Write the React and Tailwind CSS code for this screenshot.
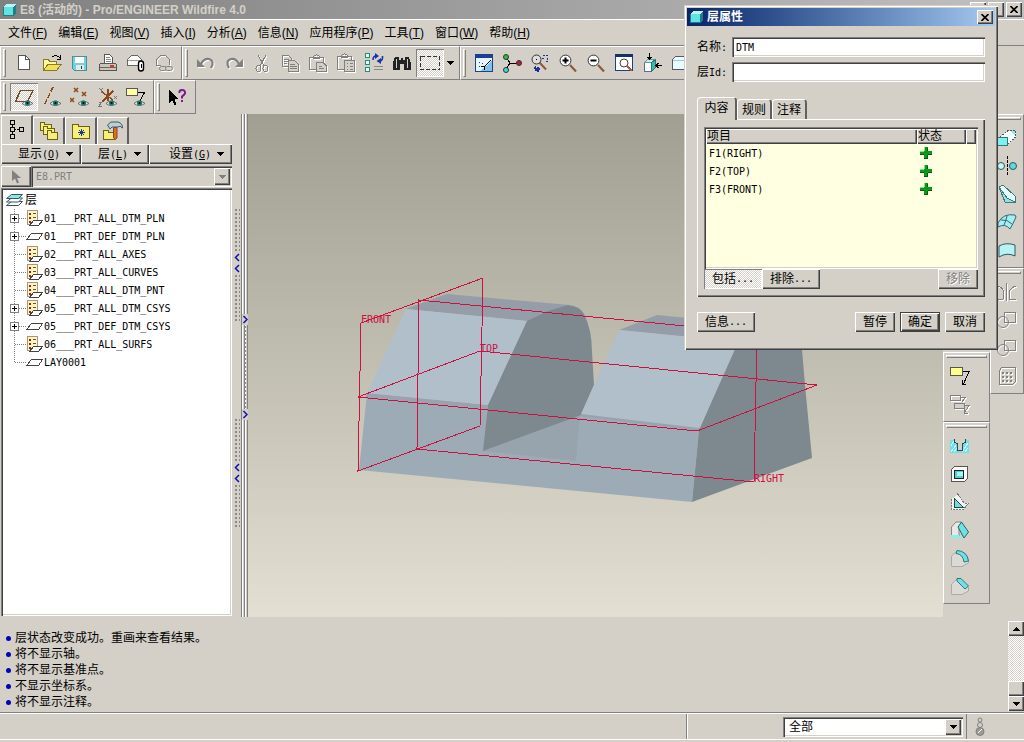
import { useState } from 'react';

const raised = "bg-[#d4d0c8] shadow-[inset_1px_1px_0_#fff,inset_-1px_-1px_0_#404040,inset_-2px_-2px_0_#808080]";
const sunken = "shadow-[inset_1px_1px_0_#808080,inset_2px_2px_0_#404040,inset_-1px_-1px_0_#fff,inset_-2px_-2px_0_#d4d0c8]";
const checker = "bg-[repeating-conic-gradient(#fff_0_25%,#d4d0c8_0_50%)] bg-[size:2px_2px]";
const pressed = `${checker} shadow-[inset_1px_1px_0_#808080,inset_-1px_-1px_0_#fff]`;
const dots = "bg-[radial-gradient(#8a8a8a_1px,transparent_1px)] bg-[size:4px_4px]";

const Mono = ({ children }) => (
  <span className="font-['DejaVu_Sans_Mono',monospace] text-[10px]">{children}</span>
);

const Svg = ({ children, off }) => (
  <svg
    width="20"
    height="20"
    viewBox="0 0 20 20"
    fill="none"
    stroke={off ? '#808080' : '#000'}
    shapeRendering="crispEdges"
    className={`shrink-0 ${off ? 'drop-shadow-[1px_1px_0_#fff]' : ''}`}
  >
    {children}
  </svg>
);

const Eye = () => (
  <g shapeRendering="auto">
    <path d="M8 16.5Q13 11.5 19 16.5Q13 20.5 8 16.5Z" fill="#d9ece8" stroke="#555" strokeWidth="0.8" />
    <circle cx="13.5" cy="16" r="2.6" fill="#177a6d" stroke="none" />
    <circle cx="13.5" cy="16" r="1" fill="#000" stroke="none" />
  </g>
);

const Lens = ({ children }) => (
  <g shapeRendering="auto">
    <path d="M12 12L18 18.5" stroke="#8b5a3c" strokeWidth="2.2" />
    <circle cx="7.5" cy="7.5" r="5.4" fill="#fff" stroke="#333" />
    {children}
  </g>
);

const icons = {
  new: <Svg><path d="M4.5 2.5H11.5L15.5 6.5V16.5H4.5Z" fill="#fff" stroke="#555" /><path d="M11.5 2.5V6.5H15.5" stroke="#555" /></Svg>,
  open: <Svg><path d="M1.5 17V6.5H6L8 8.5H14.5V11" fill="#fff6a0" stroke="#8a7a20" /><path d="M1.5 17.5L6 11H19.5L14.5 17.5Z" fill="#f3e05a" stroke="#8a7a20" /><path d="M10 4Q14 1 18 5M18.5 2V6H15" /></Svg>,
  save: <Svg><path d="M2.5 3.5H16.5V17.5H4.5L2.5 15.5Z" fill="#6fd3de" stroke="#4d8f99" /><path d="M5 4H14V10H5Z" fill="#fff" stroke="none" /><path d="M6 12H14V17H6Z" fill="#e8e8e8" stroke="none" /><path d="M11.5 13V16" stroke="#333" /></Svg>,
  print: <Svg><path d="M6.5 11V1.5H11.5L14.5 4.5V11" fill="#fff" stroke="#555" /><path d="M8 4.5H12M8 6.5H13M8 8.5H13" stroke="#888" /><path d="M2.5 10.5H17.5L18.5 12V17.5H1.5V12Z" fill="#c9c5bb" stroke="#555" /><path d="M2 14.5H18" stroke="#6b675e" /><path d="M12 12H16V14H12Z" fill="#d23b2b" stroke="none" /></Svg>,
  mail: <Svg><path d="M1.5 12.5V6.5L5.5 2.5H11.5L15.5 6.5V12.5Z" fill="#fbfbfb" stroke="#666" /><path d="M2 7.5H15" stroke="#999" /><path d="M12.5 10.5Q12.5 8 15 8Q17.5 8 17.5 10.5V15.5Q17.5 18 15 18Q12.5 18 12.5 15.5Z" fill="#fff" strokeWidth="1.4" shapeRendering="auto" /><path d="M15.5 11V15" /></Svg>,
  mailLink: <Svg off><path d="M2.5 13V6.5L6.5 2.5H11.5L15.5 6.5V12M2.5 12.5H7" /><g shapeRendering="auto"><rect x="5.5" y="13.5" width="7" height="4" rx="2" fill="#d4d0c8" /><rect x="11.5" y="13.5" width="7" height="4" rx="2" fill="#d4d0c8" /></g></Svg>,
  undo: <Svg off><g shapeRendering="auto"><path d="M5 11Q8 5 13 6Q19 8 15 15" strokeWidth="2.2" /><path d="M1 6V14H9Z" fill="#808080" stroke="none" /></g></Svg>,
  redo: <Svg off><g shapeRendering="auto"><path d="M15 11Q12 5 7 6Q1 8 5 15" strokeWidth="2.2" /><path d="M19 6V14H11Z" fill="#808080" stroke="none" /></g></Svg>,
  cut: <Svg off><path d="M6 2L12 13M14 2L8 13" /><ellipse cx="6.5" cy="15.5" rx="2.5" ry="3" /><ellipse cx="13.5" cy="15.5" rx="2.5" ry="3" /></Svg>,
  copy: <Svg off><path d="M2.5 2.5H8.5L11.5 5.5V13.5H2.5Z M4 6.5H9M4 8.5H9M4 10.5H7" /><path d="M8.5 7.5H14.5L18.5 11.5V18.5H8.5Z M10 11.5H15M10 13.5H17M10 15.5H17" fill="#d4d0c8" /></Svg>,
  paste: <Svg off><path d="M1.5 4.5H15.5V16.5H1.5Z M5.5 5.5V3.5L8.5 1.5L11.5 3.5V5.5Z" /><path d="M8.5 9.5H15L18.5 13V18.5H8.5Z M10.5 13.5H14M10.5 15.5H16" fill="#d4d0c8" /></Svg>,
  pasteSpecial: <Svg off><path d="M1.5 3.5H15.5V16.5H1.5Z M5.5 4.5V2.5L8.5 0.5L11.5 2.5V4.5Z" /><path d="M8.5 7.5H18.5V18.5H8.5Z M10.5 10.5H12M14 10.5H17M10.5 13.5H12M14 13.5H17M10.5 16.5H12M14 16.5H17" fill="#d4d0c8" /></Svg>,
  regen: <Svg><path d="M1.5 0.5H5.5V4.5H1.5ZM1.5 7.5H5.5V11.5H1.5ZM1.5 14.5H5.5V18.5H1.5Z" fill="#e4fbf7" stroke="#2b8a7b" strokeWidth="1.4" /><g shapeRendering="auto"><path d="M9 7Q9 3 12 3M18.5 3Q19 7.500 16 8" stroke="#1636a8" strokeWidth="1.6" /><path d="M11 0V6L15 3ZM17 11V5L12.5 8Z" fill="#1636a8" stroke="none" /></g><path d="M10 13.5H19M10 16.5H19" stroke="#888" /></Svg>,
  find: <Svg><path d="M3 4H7V7H9V5H11V7H13V4H17L19 10V17H12V11H8V17H1V10Z" fill="#222" stroke="none" /><path d="M4.5 6V15M15.5 6V15" stroke="#ccc" /></Svg>,
  select: <Svg><path d="M0.5 3.5H19.5V16.5H0.5Z" strokeDasharray="4 2" stroke="#333" /></Svg>,
  repaint: <Svg><path d="M1.5 1.5H18.5V18.5H1.5Z" fill="#e6f6ff" stroke="#1b3f97" /><path d="M1 1H19V5H1Z" fill="#1b3f97" stroke="none" /><path d="M18 8V18H6Z" fill="#7cc4ee" stroke="none" /><path d="M5 9H6M8 10H9M5 13H6M9 13H10" stroke="#1b3f97" /><path d="M17 7L11 13L7 14M11 13L10 17" /></Svg>,
  spin: <Svg><path d="M4 4L8 10H17M8 10L4 16" /><g stroke="#333" shapeRendering="auto"><circle cx="4" cy="4" r="2.5" fill="#2fbf3a" /><circle cx="17" cy="10" r="2.5" fill="#b32030" /><circle cx="4" cy="17" r="2.5" fill="#45d8d8" /></g></Svg>,
  orient: <Svg><g shapeRendering="auto"><path d="M9 9L16 16.5" stroke="#8b5a3c" strokeWidth="2" /><circle cx="6.5" cy="6.5" r="4.5" fill="#ddd" stroke="#333" /></g><path d="M6 6.5H7" /><path d="M13 2.5H19M12 5.5H15M17.5 5V8M15.5 8.5H18" stroke="#1c2f9c" strokeDasharray="2 1" /><path d="M5.5 13Q3 18 9 18.5M7 14V19L10 16Z" stroke="#1c2f9c" fill="#1c2f9c" /></Svg>,
  zoomIn: <Svg><Lens><path d="M4.5 7.5H10.5M7.5 4.5V10.5" strokeWidth="2" /></Lens></Svg>,
  zoomOut: <Svg><Lens><path d="M4.5 7.5H10.5" strokeWidth="2" /></Lens></Svg>,
  refit: <Svg><path d="M1.5 1.5H18.5V17.5H1.5Z" fill="#fff" stroke="#1b3f97" /><path d="M1 1H19V4H1Z" fill="#14306f" stroke="none" /><circle cx="10" cy="10" r="4" fill="#fff" stroke="#444" shapeRendering="auto" /><path d="M13 13L18 18" stroke="#a8603c" strokeWidth="2" /></Svg>,
  view: <Svg><path d="M2.5 9.5H9.5V18.5H2.5Z" fill="#fff" stroke="#669" /><path d="M2.5 9.5L5.5 6.5H13.5L9.5 9.5Z" fill="#bdf2ee" stroke="#699" /><path d="M9.5 9.5L13.5 6.5V14.5L9.5 18.5Z" fill="#3fb5b0" stroke="#277" /><path d="M7.5 0V6M5.5 4L7.5 6.5L9.5 4M20 12.5H14M16.5 10L14 12.5L16.5 15" /></Svg>,
  named: <Svg><path d="M2.5 6.5L5.5 3.5H18V16.5H2.5Z" fill="#eafcff" stroke="#557" /><path d="M3 7H17" stroke="#9cc" /></Svg>,
  plane: <Svg><path d="M6.5 3.5H19L13.5 14.5H1.5Z" stroke="#7a4a22" strokeWidth="1.5" /><Eye /></Svg>,
  axis: <Svg><path d="M11 0L2 19" stroke="#8b4a1c" strokeWidth="1.5" strokeDasharray="5 2" /><Eye /></Svg>,
  points: <Svg><path d="M4 1L8 5M8 1L4 5M0 11L4 15M4 11L0 15M12 5L16 9M16 5L12 9" stroke="#8b4a1c" strokeWidth="1.5" shapeRendering="auto" /><Eye /></Svg>,
  csys: <Svg><path d="M10 2V14M4 5L15 13M15 4L4 15" stroke="#8b4a1c" strokeWidth="1.5" /><path d="M1 1L3 3L5 1M3 3V6M16 9L19 12M19 9L16 12M1 15H4L1 19H4" stroke="#777" /><Eye /></Svg>,
  annot: <Svg><path d="M0.5 1.5H11.5V8.5H0.5Z" fill="#ffffa0" stroke="#555" /><path d="M12 5.5H18.5L14 14" /><Eye /></Svg>,
  help: <Svg><path d="M1 3V16L4 13L6.5 18L8.5 17L6.5 12H10Z" fill="#000" stroke="none" /><path d="M11.5 6Q11 3 14 3Q17.5 3 17 6.5Q16 8 14 9.5V11.5M14 13V15" stroke="#7b1a8b" strokeWidth="2" shapeRendering="auto" /></Svg>,
  extrude: <Svg><path d="M3 9L11 2.5H18.5V9L11 16" fill="#f4ffff" stroke="#555" strokeDasharray="2 1" /><path d="M14 3H18V8Z" fill="#7ff0f0" stroke="none" /><path d="M0.5 9.5H10.5V17.5H0.5Z" fill="#7ff0f0" stroke="#377" /></Svg>,
  revolve: <Svg><path d="M10.5 0V19" strokeDasharray="3 1" /><g stroke="#355" shapeRendering="auto"><circle cx="4" cy="10" r="3.5" fill="#c5f5f5" /><circle cx="16" cy="10" r="3.5" fill="#5fd8e0" /></g></Svg>,
  sweep: <Svg><path d="M2 3L6 1L18 12V18H8Z" fill="#e6fbfb" stroke="#477" /><path d="M2 3L10 14L18 18H8Z" fill="#8ce4e4" stroke="#477" /></Svg>,
  blend: <Svg><g shapeRendering="auto"><path d="M1 11Q6 1 18 3L19 5Q16 12 13 17Q8 11 1 15Z" fill="#a6eef0" stroke="#367" /><path d="M4 8Q10 7 15 12M10 4Q9 9 7 13" stroke="#367" /></g></Svg>,
  surface: <Svg><path d="M2 6Q9 2 18 5V16Q10 12 2 17Z" fill="#b8f2f2" stroke="#356" shapeRendering="auto" /></Svg>,
  mirror: <Svg off><path d="M9.5 1V19M1 4Q7 6 7 12L6 17H1M19 4Q12 6 12 12V17H19" /></Svg>,
  merge: <Svg off><path d="M7.5 2.5H18.5V12.5H7.5Z" /><circle cx="6" cy="12" r="5.5" shapeRendering="auto" /></Svg>,
  grid: <Svg off><path d="M2.5 4.5L4.5 1.5H18.5V15.5L15.5 18.5H2.5Z" /><path d="M5 6.5H15M5 10.5H15M5 14.5H15" strokeWidth="2" strokeDasharray="2 2" /></Svg>,
  note: <Svg><path d="M0.5 1.5H12.5V9.5H0.5Z" fill="#ffff8c" stroke="#555" /><path d="M13 5.5H19L13.5 18M12 14V18H16" /></Svg>,
  notes: <Svg off><path d="M0.5 1.5H10.5V6.5H0.5ZM11 3.5H15L12 8" /><path d="M4.5 9.5H14.5V14.5H4.5ZM15 11.5H19L15 18M14 15V19H18" fill="#d4d0c8" /></Svg>,
  hole: <Svg><path d="M0 3.5H5V6L7.5 8V14H12.5V8L15 6V3.5H19V17H0Z" fill="#74dfe6" stroke="none" /><path d="M1 16L6 9M4 16L7 12M12 16L18 7M1 10L4 5M15 16L18 12" stroke="#c8fafa" /><path d="M4.5 3V6L7.5 8V14H12.5V8L15.5 6V3" stroke="#345" /></Svg>,
  shell: <Svg><path d="M1.5 5.5L4.5 2.5H17.5V14.5L14.5 17.5H1.5Z" fill="#fff" stroke="#555" /><path d="M4.5 6.5H13.5V14.5H4.5Z" fill="#53cdd6" stroke="#222" /><path d="M7 8H13V12H7Z" fill="#a6f4f6" stroke="none" /></Svg>,
  rib: <Svg><path d="M1.5 7V17.5H13L19 11H14L7 1V3" fill="#f3f3f0" stroke="#777" strokeDasharray="2 1" /><path d="M4 6V15H13Z" fill="#6fdde2" stroke="#244" /></Svg>,
  draft: <Svg><g shapeRendering="auto"><path d="M1.5 7L6 2H11.5L9 7V17H1.5Z" fill="#e8e8e4" stroke="#888" /><path d="M11.5 2L18.5 12L14 18L8 7Z" fill="#6fe0e4" stroke="#266" /></g><path d="M1 14.5H8L13 18H1Z" fill="#8ee" stroke="none" /></Svg>,
  round: <Svg><g shapeRendering="auto"><path d="M1.5 17.5V8L7 3Q17 3 18.5 12V15L12 18.5H1.5Z" fill="#dcdad4" stroke="#aaa" /><path d="M7 2.5Q17 3 18.5 13L14 14Q13 6 6 5.5Z" fill="#6fe0e8" stroke="#377" /></g></Svg>,
  chamfer: <Svg><g shapeRendering="auto"><path d="M1.5 17.5V8L7 3H10L18.5 11V15L12 18.5H1.5Z" fill="#dcdad4" stroke="#aaa" /><path d="M7 2.5H11L18.5 10L15 13L7 5Z" fill="#6fe0e8" stroke="#377" /></g></Svg>,
  tree: <Svg><path d="M3.5 0.5H7.5V4.5H3.5ZM3.5 7.5H7.5V11.5H3.5ZM3.5 14.5H7.5V18.5H3.5ZM12.5 7.5H16.500V11.5H12.5ZM5.5 5V7M5.500 12V14M8 9.5H9M10 9.5H12" /></Svg>,
  folders: <Svg><g fill="#f8ee7a" stroke="#6b6216"><path d="M1.5 1.5H5L6 3.5H12.5V9.5H1.5Z" /><path d="M4.5 5.5H8L9 7.5H15.5V13.5H4.5Z" /><path d="M8.5 9.5H12L13 11.5H18.5V18.5H8.5Z" /></g></Svg>,
  favorites: <Svg><path d="M1.5 5.5V3.5H7L8 5.5H18.5V17.5H1.5Z" fill="#f8ee7a" stroke="#6b6216" /><path d="M10.500 8V15M7 11.5H14M8 9L13 14M13 9L8 14" stroke="#1a3a8c" /></Svg>,
  tools: <Svg><path d="M0.5 9.5H5L6 11.5H11.5V18.5H0.5Z" fill="#f8ee7a" stroke="#6b6216" /><g shapeRendering="auto"><path d="M4.5 4L8 1H15Q19.5 2 19.5 7Q17 4 15 6H9L7 8Z" fill="#b8d0d8" stroke="#456" /><path d="M10.5 6.5H14V17Q12 20 10.500 17Z" fill="#d8721c" stroke="#843" /></g></Svg>,
};

const ToolButton = ({ name, label, active }) => (
  <button aria-label={label} className={`flex h-7 w-7 shrink-0 items-center justify-center ${active ? pressed : ''}`}>
    {icons[name]}
  </button>
);

const ToolGroup = ({ items, vertical, children }) => (
  <div
    className={`flex shrink-0 border border-t-white border-r-[#808080] border-b-[#808080] border-l-white ${
      vertical ? 'flex-col px-0.5 pt-0.5 pb-[3px]' : 'items-center py-0.5 pr-[3px] pl-0.5'
    }`}
  >
    <span className={`shrink-0 border border-t-white border-r-[#808080] border-b-[#808080] border-l-white ${vertical ? 'mb-1 h-[3px]' : 'mr-1 h-7 w-[3px]'}`} />
    {items.map(([name, label, active], i) => (
      <ToolButton key={i} name={name} label={label} active={active} />
    ))}
    {children}
  </div>
);

const menus = [
  ['文件', 'F'], ['编辑', 'E'], ['视图', 'V'], ['插入', 'I'], ['分析', 'A'],
  ['信息', 'N'], ['应用程序', 'P'], ['工具', 'T'], ['窗口', 'W'], ['帮助', 'H'],
];

const fileTools = [
  ['new', '新建'], ['open', '打开'], ['save', '保存'], ['print', '打印'], ['mail', '发送'], ['mailLink', '发送链接'],
];
const editTools = [
  ['undo', '撤消'], ['redo', '重做'], ['cut', '剪切'], ['copy', '复制'], ['paste', '粘贴'],
  ['pasteSpecial', '选择性粘贴'], ['regen', '再生'], ['find', '查找'], ['select', '选取', true],
];
const viewTools = [
  ['repaint', '重画'], ['spin', '旋转中心'], ['orient', '定向模式'], ['zoomIn', '放大'],
  ['zoomOut', '缩小'], ['refit', '重新调整'], ['view', '重定向'], ['named', '已命名视图'],
];
const datumTools = [
  ['plane', '基准平面', true], ['axis', '基准轴'], ['points', '基准点'], ['csys', '坐标系'], ['annot', '注释'],
];
const shapeTools = [['extrude', '拉伸'], ['revolve', '旋转'], ['sweep', '扫描'], ['blend', '混合'], ['surface', '造型']];
const editFeatures = [['mirror', '镜像'], ['merge', '合并'], ['merge', '修剪'], ['grid', '阵列']];
const noteTools = [['note', '注释'], ['notes', '注释传播']];
const engTools = [['hole', '孔'], ['shell', '壳'], ['rib', '筋'], ['draft', '拔模'], ['round', '倒圆角'], ['chamfer', '倒角']];

const layers = [
  { name: '01___PRT_ALL_DTM_PLN', rule: true, open: true },
  { name: '01___PRT_DEF_DTM_PLN', open: true },
  { name: '02___PRT_ALL_AXES', rule: true },
  { name: '03___PRT_ALL_CURVES', rule: true },
  { name: '04___PRT_ALL_DTM_PNT', rule: true },
  { name: '05___PRT_ALL_DTM_CSYS', rule: true, open: true },
  { name: '05___PRT_DEF_DTM_CSYS', open: true },
  { name: '06___PRT_ALL_SURFS', rule: true },
  { name: 'LAY0001' },
];

const messages = ['层状态改变成功。重画来查看结果。', '将不显示轴。', '将不显示基准点。', '不显示坐标系。', '将不显示注释。'];

const Caret = ({ up, gray }) => (
  <svg width="7" height="4" viewBox="0 0 7 4" className="shrink-0" fill={gray ? '#808080' : '#000'} shapeRendering="crispEdges">
    <path d={up ? 'M0 4H7L3.5 0Z' : 'M0 0H7L3.5 4Z'} />
  </svg>
);

const Cross = () => (
  <svg width="8" height="7" viewBox="0 0 8 7" stroke="#000" strokeWidth="1.6">
    <path d="M0.5 0L7.5 7M7.5 0L0.5 7" />
  </svg>
);

const Cube = () => (
  <svg width="13" height="12" viewBox="0 0 13 12" shapeRendering="crispEdges">
    <path d="M0 3L3 0H13V9L10 12H0Z" fill="#1d7f86" />
    <path d="M0 3L3 0H13L10 3Z" fill="#b8f4f4" />
    <path d="M1 3H10V11H1Z" fill="#5fe3e3" />
  </svg>
);

const LayerIcon = ({ rule }) => (
  <svg width="17" height="16" viewBox="0 0 17 16" fill="none" shapeRendering="crispEdges" className="shrink-0">
    {rule ? (
      <>
        <path d="M1.5 0.5H11.5V14.5H1.5Z" fill="#fff3bf" stroke="#a8986a" />
        <path d="M3 3.5H5M3 7.5H5M3 11.5H5" stroke="#a02020" strokeWidth="2" />
        <path d="M7 3.5H10M7 7.5H10" stroke="#555" />
        <path d="M7.5 10.5H16.5L12.5 15.5H3.5Z" fill="#fff" stroke="#444" />
      </>
    ) : (
      <path d="M5.5 5.5H16.5L12.5 11.5H0.5Z" fill="#fff" stroke="#444" />
    )}
  </svg>
);

const LayerTree = () => (
  <div className={`flex-1 bg-white px-[5px] pt-[3px] ${sunken}`}>
    <div className="flex h-[18px] items-center gap-[2px]">
      <svg width="17" height="14" viewBox="0 0 17 14" stroke="#356">
        <path d="M5.5 8.5H16.5L12.5 12.5H0.5Z" fill="#fff" />
        <path d="M5.5 5H16.5L12.5 9H0.5Z" fill="#fff" />
        <path d="M5.5 1.5H16.5L12.5 5.5H0.5Z" fill="#8fe6ea" />
      </svg>
      层
    </div>
    <ul>
      {layers.map((layer, i) => (
        <li key={layer.name} className="flex h-[18px] items-center">
          <svg width="16" height="18" viewBox="0 0 16 18" fill="none" shapeRendering="crispEdges" className="ml-1 shrink-0">
            <path
              d={i === layers.length - 1 ? 'M4.5 0V9M5 9.5H16' : 'M4.5 0V18M5 9.5H16'}
              stroke="#808080"
              strokeDasharray="1 1"
            />
            {layer.open && (
              <>
                <path d="M0.5 5.5H8.5V13.5H0.5Z" fill="#fff" stroke="#808080" />
                <path d="M2 9.5H7M4.5 7V12" stroke="#000" />
              </>
            )}
          </svg>
          <LayerIcon rule={layer.rule} />
          <button className="ml-px leading-[18px]"><Mono>{layer.name}</Mono></button>
        </li>
      ))}
    </ul>
  </div>
);

const Navigator = () => (
  <aside className="flex w-[232px] shrink-0 flex-col pt-px pl-px">
    <div className="flex h-[29px] items-end">
      {[['tree', '模型树'], ['folders', '文件夹'], ['favorites', '收藏夹'], ['tools', '连接']].map(([name, label], i) => (
        <button
          key={name}
          aria-label={label}
          className={`flex w-8 items-center justify-center border-t border-r-2 border-l border-t-white border-r-[#606060] border-l-white ${i === 0 ? 'h-[29px]' : 'h-[27px]'}`}
        >
          {icons[name]}
        </button>
      ))}
    </div>
    <div className="flex h-5">
      {[['显示', 'O', 'w-20'], ['层', 'L', 'w-[68px]'], ['设置', 'G', 'flex-1']].map(([text, key, width]) => (
        <button key={key} className={`flex items-center justify-end gap-1.5 pr-2 ${width} ${raised}`}>
          <span>{text}<Mono>(<u>{key}</u>)</Mono></span>
          <Caret />
        </button>
      ))}
    </div>
    <div className="mt-0.5 flex h-[21px]">
      <button aria-label="选取" className={`flex w-[30px] items-center justify-center ${raised}`}>
        <svg width="9" height="14" viewBox="0 0 9 14" fill="#808080"><path d="M0 0V11L3 8.5L5 13.5L7 12.5L5 8H9Z" /></svg>
      </button>
      <div className={`flex flex-1 p-0.5 ${sunken}`}>
        <select aria-label="模型" disabled className="min-w-0 flex-1 appearance-none pl-[3px] font-['DejaVu_Sans_Mono',monospace] text-[10px] text-[#808080] opacity-100">
          <option>E8.PRT</option>
        </select>
        <span className={`flex w-4 items-center justify-center ${raised}`}><Caret gray /></span>
      </div>
    </div>
    <div className="flex flex-1 pt-px pb-px"><LayerTree /></div>
  </aside>
);

const Chevrons = ({ d }) => (
  <svg width="6" height={d.length * 11} viewBox={`0 0 6 ${d.length * 11}`} fill="none" stroke="#1010b0" strokeWidth="1.5">
    {d.map((dir, i) => (
      <path key={i} transform={`translate(0 ${i * 11})`} d={dir === '<' ? 'M5 2L1.5 5.5L5 9' : 'M1.5 2L5 5.5L1.5 9'} />
    ))}
  </svg>
);

const Sash = () => (
  <div className="flex shrink-0">
    <div className="flex w-[9px] flex-col items-center pt-[94px]">
      <span className={`h-11 w-1.5 ${dots}`} />
      <Chevrons d={['<', '<']} />
      <span className={`h-12 w-1.5 ${dots}`} />
      <span className="h-24" />
      <span className={`h-11 w-1.5 ${dots}`} />
      <Chevrons d={['<', '<']} />
      <span className={`h-11 w-1.5 ${dots}`} />
    </div>
    <div className="flex w-[7px] flex-col items-center border-x border-[#808080] bg-[linear-gradient(to_right,#fff_1px,#d4d0c8_1px,#d4d0c8_2px,#808080_2px,#808080_3px,#fff_3px,#fff_4px,#d4d0c8_4px)] pt-[200px]">
      <span className="h-[11px] bg-[#d4d0c8]"><Chevrons d={['>']} /></span>
      <span className={`h-[84px] w-1 ${dots}`} />
      <span className="h-[11px] bg-[#d4d0c8]"><Chevrons d={['>']} /></span>
    </div>
  </div>
);

const Viewport = () => (
  <main className="min-w-0 flex-1 overflow-hidden bg-linear-to-b from-[#a19e92] to-[#e3e0d3]">
    <svg width="695" height="502" viewBox="248 114 695 502" className="block">
      <g stroke="none">
        <path d="M367 393L488 405L484 450L582 413L699 430L692 502L359 470Z" fill="#9dabb6" />
        <path d="M367 393L488 405L487 409L366 397ZM582 412L700 425L699 431L580 416Z" fill="#98a3af" />
        <path d="M483 451L580 415L576 461Z" fill="#98a4ad" />
        <path d="M405 309L447 294L570 305L527 321Z" fill="#959ea8" />
        <path d="M406 309L527 321L488 405L367 393Z" fill="#b1bfcb" />
        <path d="M527 321L548 311L568 305Q580 306 584 314Q592 330 592 352L594 385L581 415L483 451L488 405Z" fill="#7d898f" />
        <path d="M619 330L657 315L760 325L740 342Z" fill="#959ea8" />
        <path d="M619 330L740 342L699 428L581 414L594 385Z" fill="#b1bfcb" />
        <path d="M740 338L699 430L692 502L812 458L805 385L801 338Z" fill="#7d898f" />
      </g>
      <g fill="none" stroke="#cc1040" shapeRendering="crispEdges">
        <path d="M361 323L483 278L480 426L358 471Z" />
        <path d="M419 300L757 333L754 482L417 449Z" />
        <path d="M358 397L480 351L817 385L697 431Z" />
      </g>
      <g fill="#cc1040" className="font-['DejaVu_Sans_Mono',monospace] text-[10px]">
        <text x="361" y="323">FRONT</text>
        <text x="480" y="352">TOP</text>
        <text x="754" y="482">RIGHT</text>
      </g>
    </svg>
  </main>
);

const Field = ({ id, label, value, onChange }) => (
  <div className="flex h-5 items-center">
    <label htmlFor={id} className="w-[35px] shrink-0">{label}</label>
    <input
      id={id}
      value={value}
      onChange={onChange}
      autoFocus={id === 'layer-name'}
      className={`h-5 min-w-0 flex-1 bg-white px-1 font-['DejaVu_Sans_Mono',monospace] text-[10px] outline-none ${sunken}`}
    />
  </div>
);

const DialogButton = ({ children, className = 'w-10' }) => (
  <button className={`flex h-5 items-center justify-center ${className}`}>{children}</button>
);

const LayerDialog = () => {
  const [name, setName] = useState('DTM');
  const [layerId, setLayerId] = useState('');
  const [tab, setTab] = useState('内容');

  return (
    <section
      role="dialog"
      aria-label="层属性"
      className="absolute top-[5px] left-[684px] w-[314px] bg-[#d4d0c8] p-[3px] pb-[18px] shadow-[inset_1px_1px_0_#d4d0c8,inset_2px_2px_0_#fff,inset_-1px_-1px_0_#404040,inset_-2px_-2px_0_#808080]"
    >
      <header className="flex h-[18px] items-center bg-linear-to-r from-[#0a246a] to-[#a6caf0] pr-0.5 pl-[3px] font-bold text-white">
        <Cube />
        <h2 className="ml-1 flex-1">层属性</h2>
        <button aria-label="关闭" className={`flex h-3.5 w-4 items-center justify-center ${raised}`}><Cross /></button>
      </header>

      <div className="px-[10px]">
        <div className="mt-[11px] flex flex-col gap-[5px]">
          <Field id="layer-name" label={<>名称<Mono>:</Mono></>} value={name} onChange={(e) => setName(e.target.value)} />
          <Field id="layer-id" label={<>层<Mono>Id:</Mono></>} value={layerId} onChange={(e) => setLayerId(e.target.value)} />
        </div>

        {/* Tabs */}
        <div className="mt-[15px] flex h-[22px] items-end">
          {['内容', '规则', '注释'].map((t) => (
            <button
              key={t}
              onClick={() => setTab(t)}
              className={`relative rounded-t-sm border-t border-r-2 border-l border-t-white border-r-[#606060] border-l-white bg-[#d4d0c8] ${
                tab === t ? 'z-10 -mb-px h-[23px] w-10 pb-0.5' : 'h-5 w-[35px]'
              }`}
            >
              {t}
            </button>
          ))}
        </div>

        <div className={`px-[7px] pt-2 pb-2 ${raised}`}>
          <div className={`h-[142px] bg-[#ffffe1] p-0.5 ${sunken}`}>
            <table className="w-full table-fixed border-collapse">
              <thead>
                <tr className="h-[15px] text-left leading-[15px]">
                  <th className={`p-0 pl-px font-normal ${raised}`}>项目</th>
                  <th className={`w-[49px] p-0 pl-px font-normal ${raised}`}>状态</th>
                  <th aria-label="更多" className={`w-[10px] p-0 ${raised}`} />
                </tr>
              </thead>
              <tbody>
                {['F1(RIGHT)', 'F2(TOP)', 'F3(FRONT)'].map((item) => (
                  <tr key={item} className="h-[18px] leading-4">
                    <td className="p-0 pl-[3px]"><Mono>{item}</Mono></td>
                    <td className="p-0 pl-[3px]" colSpan={2}>
                      <svg width="12" height="12" viewBox="0 0 12 12" role="img" aria-label="包括" shapeRendering="crispEdges" className="block">
                        <path d="M4 0H8V4H12V8H8V12H4V8H0V4H4Z" fill="#0a9a1a" />
                        <path d="M4 0H5V4H4ZM0 4H4V5H0Z" fill="#8be08b" />
                        <path d="M7 1H8V4H7ZM8 7H12V8H8ZM7 8H8V12H4V11H7ZM0 7H4V8H0Z" fill="#055a10" />
                      </svg>
                    </td>
                  </tr>
                ))}
              </tbody>
            </table>
          </div>
          <div className="flex">
            <DialogButton className={`w-[58px] ${pressed}`}>包括<Mono>...</Mono></DialogButton>
            <DialogButton className={`w-[58px] ${raised}`}>排除<Mono>...</Mono></DialogButton>
            <DialogButton className={`ml-auto w-10 text-[#808080] text-shadow-[1px_1px_0_#fff] ${raised}`}>移除</DialogButton>
          </div>
        </div>

        <div className="mt-[15px] flex gap-[5px]">
          <DialogButton className={`mr-auto w-[58px] ${raised}`}>信息<Mono>...</Mono></DialogButton>
          <DialogButton className={`w-10 ${raised}`}>暂停</DialogButton>
          <DialogButton className={`w-10 border border-[#404040] ${raised}`}>确定</DialogButton>
          <DialogButton className={`w-10 ${raised}`}>取消</DialogButton>
        </div>
      </div>
    </section>
  );
};

const App = () => {
  const [filter, setFilter] = useState('全部');

  return (
    <div className="relative flex min-h-screen flex-col overflow-hidden bg-[#d4d0c8] font-['Liberation_Sans','Noto_Sans_CJK_SC',sans-serif] text-[12px] leading-4 text-black">
      <header className="flex h-[19px] items-center bg-linear-to-r from-[#808080] to-[#c0c0c0] pr-0.5 pl-[3px]">
        <Cube />
        <h1 className="ml-1 flex-1 font-bold text-[#d4d0c8]">
          E8 (活动的) - Pro/ENGINEER Wildfire 4.0
        </h1>
        <div className="flex gap-0.5">
          <button aria-label="最小化" className={`h-[15px] w-4 ${raised}`} />
          <button aria-label="最大化" className={`h-[15px] w-4 ${raised}`} />
          <button aria-label="关闭窗口" className={`flex h-[15px] w-4 items-center justify-center ${raised}`}><Cross /></button>
        </div>
      </header>

      <nav className="flex h-[27px] items-center gap-[11px] border-t border-b border-t-white border-b-[#808080] pl-2">
        {menus.map(([text, key]) => (
          <button key={key}>{text}(<u>{key}</u>)</button>
        ))}
      </nav>

      <div className="flex">
        <ToolGroup items={fileTools} />
        <ToolGroup items={editTools}>
          <button aria-label="选取选项" className="flex h-7 w-3 items-center justify-center"><Caret /></button>
        </ToolGroup>
        <ToolGroup items={viewTools} />
      </div>
      <div className="flex">
        <ToolGroup items={datumTools} />
        <ToolGroup items={[['help', '上下文帮助']]} />
      </div>

      <div className="flex flex-1">
        <Navigator />
        <Sash />
        <Viewport />
        <div className="flex shrink-0">
          <div className="w-[47px] pt-[238px]">
            <ToolGroup items={noteTools} vertical />
            <ToolGroup items={engTools} vertical />
          </div>
          <div className="w-[34px]">
            <ToolGroup items={shapeTools} vertical />
            <ToolGroup items={editFeatures} vertical />
          </div>
        </div>
      </div>

      <div className="flex h-[95px]">
        <ul className="flex-1 pt-[13px] pl-[6px]">
          {messages.map((message) => (
            <li key={message} className="flex h-4 items-center gap-1">
              <span className="h-[5px] w-[5px] rounded-full bg-[#0000c0]" />
              {message}
            </li>
          ))}
        </ul>
        <div className="flex w-4 flex-col pt-1 pb-px">
          <button aria-label="向上滚动" className={`flex h-[15px] items-center justify-center ${raised}`}><Caret up /></button>
          <span className={`flex-1 ${checker}`} />
          <span className={`h-[15px] ${raised}`} />
          <button aria-label="向下滚动" className={`flex h-[15px] items-center justify-center ${raised}`}><Caret /></button>
        </div>
      </div>

      <footer className="flex h-[30px] flex-col border-t border-[#808080]">
        <div className="flex h-[27px] border-t border-b border-white">
          <div className="w-[687px] border-r border-[#808080]" />
          <div className="flex flex-1 items-center justify-end border-r border-l border-r-[#808080] border-l-white pr-[3px]">
            <div className={`flex h-5 w-[180px] bg-white p-0.5 ${sunken}`}>
              <select
                aria-label="过滤器"
                value={filter}
                onChange={(e) => setFilter(e.target.value)}
                className="min-w-0 flex-1 appearance-none pl-1"
              >
                <option>全部</option>
                <option>几何</option>
              </select>
              <span className={`pointer-events-none flex w-4 items-center justify-center ${raised}`}><Caret /></span>
            </div>
          </div>
          <div className="flex w-[57px] items-center pl-[7px]">
            <svg width="12" height="20" viewBox="0 0 12 20" fill="#d4d0c8" stroke="#808080">
              <circle cx="6" cy="3" r="2" />
              <circle cx="6" cy="8" r="2.5" />
              <circle cx="6" cy="14.5" r="4" fill="#9a9a94" />
              <path d="M4 16L8 12" stroke="#fff" />
            </svg>
          </div>
        </div>
      </footer>

      <LayerDialog />
    </div>
  );
};

export default App;
